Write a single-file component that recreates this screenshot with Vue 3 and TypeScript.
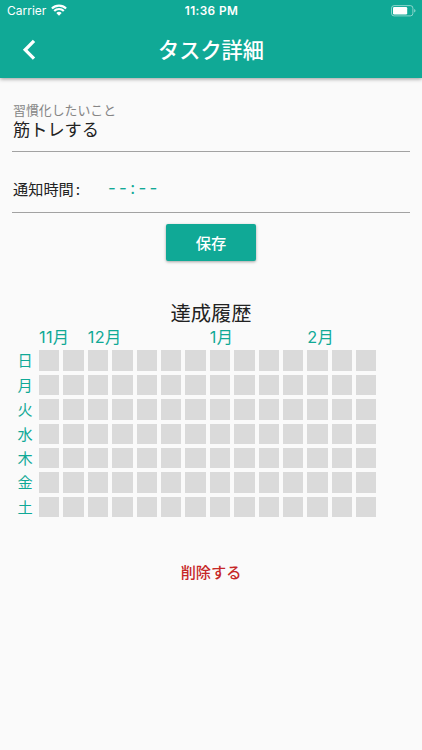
<script setup lang="ts">
interface MonthLabel {
  text: string
  column: number
}

const days: string[] = ['日', '月', '火', '水', '木', '金', '土']
const weekCount = 14
const months: MonthLabel[] = [
  { text: '11月', column: 1 },
  { text: '12月', column: 3 },
  { text: '1月', column: 8 },
  { text: '2月', column: 12 },
]
</script>

<template>
  <div class="screen">
    <header class="header">
      <div class="status">
        <div class="carrier">
          <span>Carrier</span>
          <svg class="wifi" viewBox="0 0 16 12" width="16" height="12">
            <path d="M.9 4.6a10 10 0 0 1 14.2 0M3.2 7.1a6.7 6.7 0 0 1 9.6 0" fill="none" stroke="#fff" stroke-width="2.1" />
            <path d="M5.3 9a3.8 3.8 0 0 1 5.4 0L8 11.7z" fill="#fff" />
          </svg>
        </div>
        <span class="clock">11:36 PM</span>
        <svg class="battery" viewBox="0 0 25 12" width="25" height="12">
          <rect x="0.5" y="0.6" width="21.4" height="10.3" rx="2.6" fill="none" stroke="#fff" stroke-opacity=".5" />
          <rect x="2" y="2.1" width="14.2" height="7.3" rx="1.2" fill="#fff" />
          <path d="M23.2 4v3.6q1.3-.6 1.3-1.8T23.2 4z" fill="#fff" fill-opacity=".55" />
        </svg>
      </div>
      <div class="bar">
        <svg class="back" viewBox="0 0 14 22" width="14" height="22">
          <path d="M12 1.9L3.2 10.8l8.8 8.9" fill="none" stroke="#fff" stroke-width="3.3" />
        </svg>
        <h1 class="title">タスク詳細</h1>
      </div>
    </header>

    <main class="content">
      <section class="field name-field">
        <label class="label">習慣化したいこと</label>
        <div class="value">筋トレする</div>
      </section>
      <section class="field time-field">
        <span class="time-label">通知時間<span class="colon">:</span></span>
        <span class="time">--:--</span>
      </section>
      <button class="save">保存</button>

      <h2 class="history-title">達成履歴</h2>
      <div class="history">
        <div class="months">
          <span v-for="m in months" :key="m.text" class="month" :style="{ gridColumnStart: m.column }">{{ m.text }}</span>
        </div>
        <div v-for="day in days" :key="day" class="row">
          <span class="day">{{ day }}</span>
          <i v-for="week in weekCount" :key="week" class="cell"></i>
        </div>
      </div>
      <button class="delete">削除する</button>
    </main>
  </div>
</template>

<style>
body {
  margin: 0;
  background: #fafafa;
}
</style>

<style scoped>
.screen {
  height: 750px;
  overflow: hidden;
  background: #fafafa;
  color: #222;
  font-family: "Inter", "Noto Sans CJK JP", sans-serif;
}
.header {
  height: 78px;
  background: #10a996;
  color: #fff;
  box-shadow: 0 1px 4px rgba(0, 0, 0, .4);
}
.status {
  display: grid;
  grid-template-columns: 1fr auto 1fr;
  align-items: center;
  height: 22px;
  padding: 0 6px 0 7px;
  line-height: 22px;
}
.carrier {
  display: flex;
  align-items: center;
  gap: 5px;
  font-size: 12px;
}
.wifi {
  margin-top: -2px;
}
.clock {
  font-weight: 600;
  font-size: 11.8px;
  letter-spacing: .4px;
}
.battery {
  justify-self: end;
}
.bar {
  display: grid;
  grid-template-columns: 60px 1fr 60px;
  align-items: center;
  height: 56px;
}
.back {
  margin-left: 22px;
}
.title {
  margin: 0;
  text-align: center;
  font-size: 21.2px;
  font-weight: 500;
  line-height: 30px;
}
.content {
  display: flex;
  flex-direction: column;
  align-items: center;
  padding: 0 12px;
}
.field {
  box-sizing: border-box;
  width: 100%;
  padding-left: 1px;
  border-bottom: 1px solid #a2a2a2;
}
.name-field {
  height: 74px;
  padding-top: 24px;
}
.label {
  display: block;
  color: #858585;
  font-size: 12.9px;
  line-height: 18px;
}
.value {
  font-size: 17.2px;
  line-height: 20px;
}
.time-field {
  display: flex;
  align-items: center;
  height: 61px;
  padding-top: 12px;
}
.time-label {
  width: 95px;
  font-size: 15.2px;
  white-space: nowrap;
}
.colon {
  margin-left: 2px;
}
.time {
  color: #10a996;
  font-size: 17px;
  letter-spacing: 3.3px;
}
.save {
  width: 90px;
  height: 37px;
  margin-top: 11px;
  padding: 0 0 2px;
  border: 0;
  border-radius: 2px;
  background: #10a996;
  box-shadow: 0 1px 3px rgba(0, 0, 0, .35);
  color: #fff;
  font-family: inherit;
  font-size: 15.3px;
  font-weight: 500;
}
.history-title {
  margin: 38px 0 0;
  font-size: 20.3px;
  font-weight: 400;
  line-height: 30px;
}
.history {
  align-self: flex-start;
  margin-left: 3px;
  color: #10a996;
}
.months {
  display: grid;
  grid-template-columns: repeat(14, 20.4px);
  column-gap: 4px;
  height: 21.4px;
  padding-left: 24px;
  font-size: 16.3px;
  line-height: 16px;
}
.month {
  white-space: nowrap;
  letter-spacing: .3px;
}
.row {
  display: grid;
  grid-template-columns: 20px repeat(14, 20.4px);
  grid-template-rows: 20.4px;
  column-gap: 4px;
  margin-bottom: 4px;
}
.day {
  text-align: center;
  font-size: 15.2px;
  line-height: 22px;
}
.cell {
  background: #dadada;
}
.delete {
  margin-top: 41px;
  padding: 0;
  border: 0;
  background: none;
  color: #c62828;
  font-family: inherit;
  font-size: 15.2px;
  font-weight: 500;
  line-height: 22px;
}
</style>
